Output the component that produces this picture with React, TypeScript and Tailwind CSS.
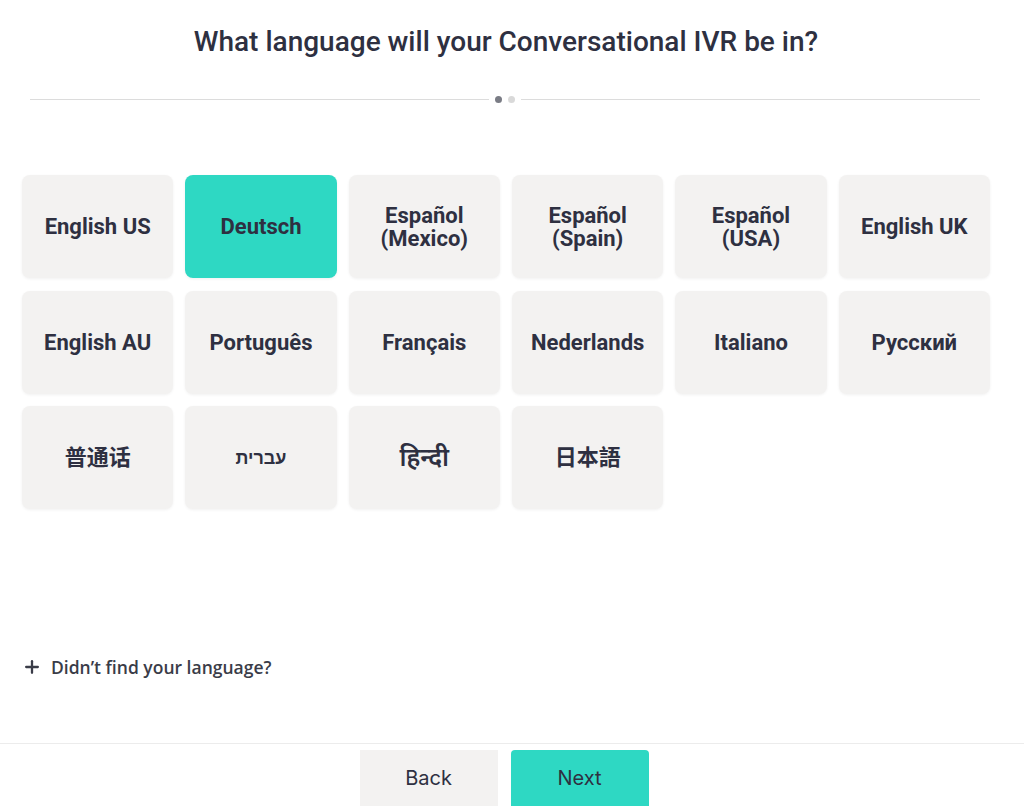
import { Plus } from 'lucide-react';

const langs: { label: string; lines?: string[]; cls?: string }[] = [
  { label: 'English US' },
  { label: 'Deutsch' },
  { label: 'Español (Mexico)', lines: ['Español', '(Mexico)'] },
  { label: 'Español (Spain)', lines: ['Español', '(Spain)'] },
  { label: 'Español (USA)', lines: ['Español', '(USA)'] },
  { label: 'English UK' },
  { label: 'English AU' },
  { label: 'Português' },
  { label: 'Français' },
  { label: 'Nederlands' },
  { label: 'Italiano' },
  { label: 'Русский' },
  { label: '普通话' },
  { label: 'עברית', cls: 'text-[18px] font-semibold' },
  { label: 'हिन्दी', cls: 'text-[25px] font-semibold' },
  { label: '日本語' },
];

const selected = 'Deutsch';

export default function App() {
  return (
    <div className="w-[1024px] h-[806px] bg-white flex flex-col overflow-hidden font-['Roboto','Noto_Sans','Noto_Sans_CJK_SC',sans-serif] text-[#2e3041]">
      <div className="flex-1 pl-[22px] pr-[34px]">
        <h1 className="pt-[24px] text-center text-[28px] font-medium leading-[36px]">
          What language will your Conversational IVR be in?
        </h1>

        <div className="mt-[36px] mx-[8px] flex items-center gap-[6px] pr-[2px]">
          <div className="flex-1 h-px bg-[#dcdcdc]" />
          <span className="w-[7px] h-[7px] rounded-full bg-[#7a7c85]" />
          <span className="w-[7px] h-[7px] rounded-full bg-[#d9d9d9]" />
          <div className="flex-1 h-px bg-[#dcdcdc]" />
        </div>

        <div className="mt-[72px] grid grid-cols-6 gap-x-3 gap-y-[12.5px]">
          {langs.map((l) => (
            <button
              key={l.label}
              className={`h-[103px] rounded-lg flex flex-col items-center justify-center leading-[23px] shadow-[0_1px_3px_rgba(0,0,0,0.06)] ${
                l.cls ?? 'text-[22px] font-bold'
              } ${l.label === selected ? 'bg-[#2ed8c3]' : 'bg-[#f3f2f1]'}`}
            >
              {l.lines ? l.lines.map((t) => <span key={t}>{t}</span>) : <span>{l.label}</span>}
            </button>
          ))}
        </div>

        <div className="mt-[145px] flex items-center gap-[9px] text-[17.5px] font-['Open_Sans',sans-serif] font-semibold text-[#3a3c48]">
          <Plus size={20} strokeWidth={2.75} />
          <span>Didn’t find your language?</span>
        </div>
      </div>

      <div className="h-[63px] border-t border-[#ececec] flex justify-center gap-[13px] pt-[6px] pr-[16px]">
        <button className="w-[138px] h-[56px] bg-[#f3f2f1] text-[20px] font-['Inter',sans-serif]">Back</button>
        <button className="w-[138px] h-[56px] bg-[#2ed8c3] rounded-t-sm text-[20px] font-['Inter',sans-serif]">Next</button>
      </div>
    </div>
  );
}
